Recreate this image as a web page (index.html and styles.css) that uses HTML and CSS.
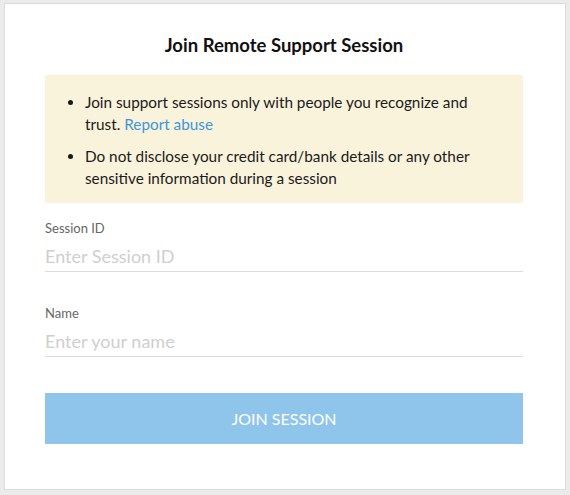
FILE: index.html
```html
<!DOCTYPE html>
<html>
<head>
<meta charset="utf-8">
<link rel="stylesheet" href="styles.css">
</head>
<body>
<div class="card">
  <h1 class="title">Join Remote Support Session</h1>
  <div class="notice">
    <ul class="notice-list">
      <li>Join support sessions only with people you recognize and trust. <a class="link" href="#">Report abuse</a></li>
      <li>Do not disclose your credit card/bank details or any other sensitive information during a session</li>
    </ul>
  </div>
  <div class="field">
    <label class="label">Session ID</label>
    <input class="input" type="text" placeholder="Enter Session ID">
  </div>
  <div class="field field-name">
    <label class="label">Name</label>
    <input class="input" type="text" placeholder="Enter your name">
  </div>
  <button class="btn">JOIN SESSION</button>
</div>
</body>
</html>
```
FILE: styles.css
```css
html, body {
  margin: 0;
  padding: 0;
}
body {
  background: #ebebeb;
  font-family: Lato, "Open Sans", sans-serif;
  padding: 3px 4px 0 4px;
}
.card {
  box-sizing: border-box;
  width: 562px;
  height: 487px;
  background: #fff;
  border: 1px solid #dcdcdc;
  padding: 30px 42px 0 40px;
}
.title {
  margin: 0;
  font-size: 18.5px;
  line-height: 22px;
  font-weight: 700;
  color: #111;
  text-align: center;
}
.notice {
  margin-top: 19px;
  background: #faf3dc;
  padding: 16px 38px 14px 0;
}
.notice-list {
  margin: 0;
  padding-left: 40px;
  font-size: 15.3px;
  line-height: 22px;
  color: #1a1a1a;
}
.notice-list li + li {
  margin-top: 10px;
}
.link {
  color: #3b97db;
  text-decoration: none;
}
.field {
  margin-top: 17px;
  display: flex;
  flex-direction: column;
}
.field-name {
  margin-top: 33px;
}
.label {
  font-size: 13px;
  line-height: 16px;
  color: #666;
}
.input {
  margin-top: 4px;
  border: none;
  border-bottom: 1px solid #dcdcdc;
  padding: 0;
  height: 31px;
  font-family: Lato, "Open Sans", sans-serif;
  font-size: 18px;
  color: #333;
  outline: none;
  background: transparent;
}
.input::placeholder {
  color: #cfcfcf;
}
.btn {
  display: block;
  width: 100%;
  margin-top: 36px;
  height: 51px;
  border: none;
  background: #8fc5ea;
  color: #fff;
  font-family: Lato, "Open Sans", sans-serif;
  font-size: 16px;
  padding: 0;
}
```
